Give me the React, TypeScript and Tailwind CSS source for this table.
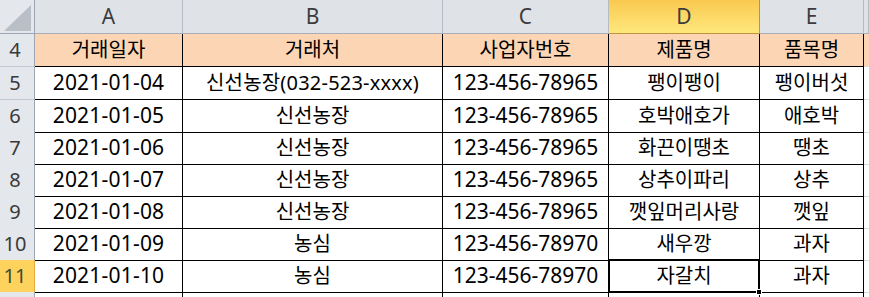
import React from "react";

const FONT = { fontFamily: '"Noto Sans", "Noto Sans CJK KR", sans-serif' };

const COLS = ["A", "B", "C", "D", "E", ""];
const HEAD = ["거래일자", "거래처", "사업자번호", "제품명", "품목명"];

const ROWS: [number, string, string, string, string, string][] = [
  [5, "2021-01-04", "신선농장(032-523-xxxx)", "123-456-78965", "팽이팽이", "팽이버섯"],
  [6, "2021-01-05", "신선농장", "123-456-78965", "호박애호가", "애호박"],
  [7, "2021-01-06", "신선농장", "123-456-78965", "화끈이땡초", "땡초"],
  [8, "2021-01-07", "신선농장", "123-456-78965", "상추이파리", "상추"],
  [9, "2021-01-08", "신선농장", "123-456-78965", "깻잎머리사랑", "깻잎"],
  [10, "2021-01-09", "농심", "123-456-78970", "새우깡", "과자"],
  [11, "2021-01-10", "농심", "123-456-78970", "자갈치", "과자"],
  [12, "2021-01-11", "농심", "123-456-78970", "꿀꽈배기", "과자"],
];

const grid = "grid grid-cols-[35px_148px_260px_166px_151px_104px_1fr]";

function RowNum({ n, active }: { n: number; active?: boolean }) {
  return (
    <div
      className={
        active
          ? "flex items-center justify-center pr-1 bg-[#fdd35d] border-r border-r-[#e2a83d] border-b border-b-[#e2a83d] text-[#3c4a36]"
          : "flex items-center justify-center pr-1 bg-[#e4e7ec] border-r border-r-[#9ea6b1] border-b border-b-[#c5cad1] text-[#3a3a3a]"
      }
    >
      {n}
    </div>
  );
}

function Cell({ children, cls = "" }: { children?: React.ReactNode; cls?: string }) {
  return (
    <div className={`flex items-center justify-center whitespace-nowrap border-r border-b border-black ${cls}`}>
      {children}
    </div>
  );
}

export default function App() {
  return (
    <div className="w-[869px] h-[297px] overflow-hidden bg-white text-[20px] text-black" style={FONT}>
      <div className={`${grid} h-[34px]`}>
        <div className="relative bg-[#e4e7ec] border-r border-r-[#9ea6b1] border-b border-b-[#9ea6b1]">
          <svg className="absolute left-[4px] top-[5px]" width="27" height="26" viewBox="0 0 27 26">
            <polygon points="27,0 27,26 0,26" fill="#b9bfc7" />
          </svg>
        </div>
        {COLS.map((c, i) =>
          c === "D" ? (
            <div
              key={i}
              className="flex items-center justify-center text-[21px] bg-gradient-to-b from-[#f9c94f] to-[#ffe87c] border-r border-r-[#c4913a] border-b border-b-[#c4913a] text-[#3c3c3c]"
            >
              {c}
            </div>
          ) : (
            <div
              key={i}
              className="flex items-center justify-center text-[21px] bg-[#dfe3e8] border-r border-r-[#b7bcc3] border-b border-b-[#a9afb8] text-[#3c3c3c]"
            >
              {c}
            </div>
          )
        )}
      </div>

      <div className={`${grid} h-[33px]`}>
        <RowNum n={4} />
        {HEAD.map((h, i) => (
          <Cell key={i} cls="bg-[#fcd5b4]">
            {h}
          </Cell>
        ))}
        <div className="bg-[#fcd5b4] border-b border-b-[#d9d9d9]" />
      </div>

      {ROWS.map(([n, a, b, c, d, e], ri) => (
        <div key={n} className={`${grid} ${ri === 0 ? "h-[33px]" : "h-[32px]"}`}>
          <RowNum n={n} active={n === 11} />
          <Cell cls="text-[21px] tracking-[0.2px]">{a}</Cell>
          <Cell cls={ri === 0 ? "text-[20px] tracking-[0.2px]" : ""}>{b}</Cell>
          <Cell cls="text-[21px]">{c}</Cell>
          {n === 11 ? (
            <div className="relative flex items-center justify-center border-r border-b border-black">
              <div className="absolute -left-[1px] -top-[1px] -right-[1px] -bottom-[1px] border-2 border-black pointer-events-none" />
              <div className="absolute -right-[3px] -bottom-[3px] w-[6px] h-[6px] bg-black border border-white" />
              {d}
            </div>
          ) : (
            <Cell>{d}</Cell>
          )}
          <Cell>{e}</Cell>
          <div className="border-b border-b-[#d9d9d9]" />
        </div>
      ))}
    </div>
  );
}
